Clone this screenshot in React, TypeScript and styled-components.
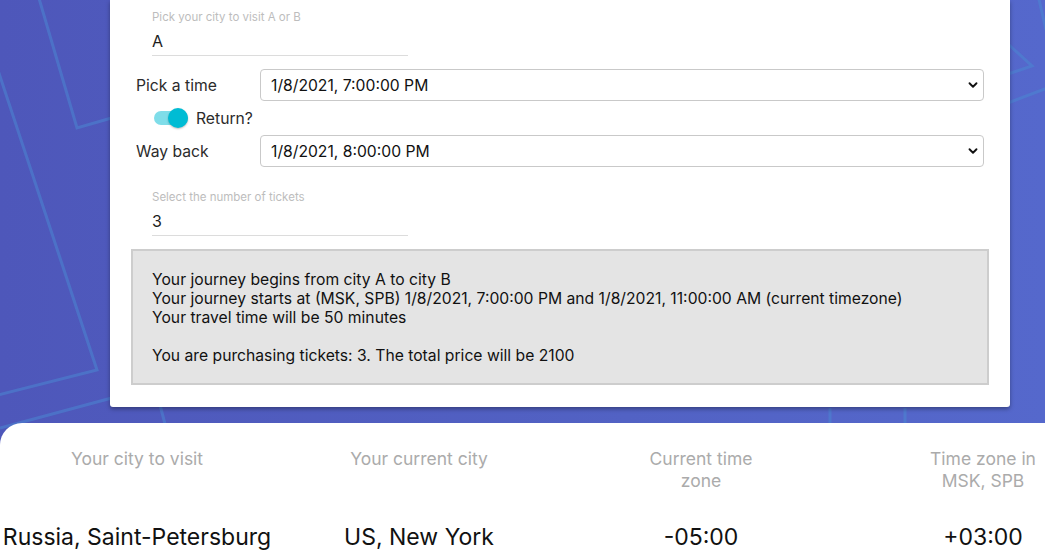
import React, { useState } from "react";
import styled, { createGlobalStyle } from "styled-components";
import { ChevronDown } from "lucide-react";

const GlobalStyle = createGlobalStyle`
  html, body {
    margin: 0;
    padding: 0;
    height: 100%;
    overflow: hidden;
  }
  body {
    font-family: Inter, "Noto Sans", "Liberation Sans", sans-serif;
    background: linear-gradient(90deg, #4e57ba 0%, #5262c4 60%, #5568cc 100%);
    color: #1d1d1d;
  }
`;

const TIMES = ["1/8/2021, 7:00:00 PM", "1/8/2021, 8:00:00 PM", "1/8/2021, 9:00:00 PM"];

const INFO = [
  { header: "Your city to visit", value: "Russia, Saint-Petersburg" },
  { header: "Your current city", value: "US, New York" },
  { header: "Current time zone", value: "-05:00", narrow: true },
  { header: "Time zone in MSK, SPB", value: "+03:00", narrow: true },
];

const Page = styled.div`
  position: relative;
  min-height: 100vh;
  display: flex;
  flex-direction: column;
  gap: 16px;
`;

const Lines = styled.svg`
  position: absolute;
  inset: 0;
  width: 100%;
  height: 100%;
  pointer-events: none;
  z-index: 0;
`;

const Card = styled.section`
  position: relative;
  z-index: 1;
  width: 900px;
  margin-left: 110px;
  box-sizing: border-box;
  padding: 10px 21px 22px;
  background: #fff;
  border-radius: 0 0 3px 3px;
  box-shadow: 0 2px 4px rgba(0, 0, 0, 0.35);
  display: flex;
  flex-direction: column;
`;

const Field = styled.label<{ $gap?: number }>`
  display: flex;
  flex-direction: column;
  width: 256px;
  margin-left: 21px;
  margin-top: ${(p) => p.$gap ?? 0}px;
`;

const FieldLabel = styled.span`
  font-size: 11.5px;
  line-height: 14px;
  color: #bdbdbd;
`;

const FieldInput = styled.input`
  font: inherit;
  font-size: 16px;
  color: #1d1d1d;
  height: 28px;
  padding: 3px 0 0;
  border: none;
  border-bottom: 1px solid #dcdcdc;
  outline: none;
  background: transparent;
`;

const SelectRow = styled.div<{ $gap?: number }>`
  display: flex;
  align-items: center;
  padding: 0 5px;
  margin-top: ${(p) => p.$gap ?? 0}px;
`;

const RowLabel = styled.span`
  width: 124px;
  flex: none;
  font-size: 15.7px;
  color: #2b2b2b;
`;

const SelectWrap = styled.div`
  position: relative;
  flex: 1;
`;

const Select = styled.select`
  appearance: none;
  width: 100%;
  height: 32px;
  box-sizing: border-box;
  padding: 0 30px 0 10px;
  font: inherit;
  font-size: 15.7px;
  color: #111;
  background: #fff;
  border: 1px solid #c9c9c9;
  border-radius: 4px;
  outline: none;
`;

const Chevron = styled(ChevronDown)`
  position: absolute;
  right: 4px;
  top: 9px;
  pointer-events: none;
  color: #111;
`;

const ToggleRow = styled.label`
  display: flex;
  align-items: center;
  gap: 8px;
  height: 34px;
  padding-left: 23px;
  font-size: 15.7px;
  color: #2b2b2b;
  cursor: pointer;
`;

const Track = styled.span<{ $on: boolean }>`
  position: relative;
  width: 34px;
  height: 14px;
  border-radius: 7px;
  background: ${(p) => (p.$on ? "#7fdde9" : "#c4c4c4")};
`;

const Thumb = styled.span<{ $on: boolean }>`
  position: absolute;
  top: -3px;
  left: ${(p) => (p.$on ? "14px" : "0")};
  width: 20px;
  height: 20px;
  border-radius: 50%;
  background: ${(p) => (p.$on ? "#00bcd4" : "#f5f5f5")};
  box-shadow: 0 1px 2px rgba(0, 0, 0, 0.25);
`;

const Summary = styled.div`
  margin-top: 13px;
  padding: 19px 19px 18px;
  background: #e4e4e4;
  border: 2px solid #cdcdcd;
  font-size: 15.7px;
  line-height: 19px;
  color: #111;
`;

const Line = styled.p<{ $gap?: boolean }>`
  margin: 0;
  margin-top: ${(p) => (p.$gap ? "19px" : "0")};
`;

const InfoPanel = styled.section`
  position: relative;
  z-index: 1;
  flex: 1;
  background: #fff;
  border-radius: 22px 0 0 0;
  padding-top: 25px;
  overflow: hidden;
`;

const InfoGrid = styled.div`
  display: grid;
  grid-template-columns: repeat(4, 282px);
  grid-auto-flow: column;
  grid-template-rows: auto auto;
  row-gap: 32px;
  margin-left: -4px;
  width: max-content;
`;

const InfoHeader = styled.div<{ $narrow?: boolean }>`
  justify-self: center;
  max-width: ${(p) => (p.$narrow ? "115px" : "none")};
  text-align: center;
  font-size: 17.5px;
  line-height: 22px;
  color: #ababab;
`;

const InfoValue = styled.div`
  text-align: center;
  font-size: 23px;
  line-height: 26px;
  color: #111;
`;

function BackgroundLines() {
  return (
    <Lines viewBox="0 0 1045 559" preserveAspectRatio="none">
      <g fill="none" stroke="#4b86d2" strokeOpacity={0.55} strokeWidth={3}>
        <polyline points="38,-5 77,128 115,117" />
        <polyline points="-6,58 97,370 -6,396" />
        <polyline points="0,428 108,399 116,397" />
        <line x1="160" y1="405" x2="165" y2="424" />
        <line x1="830" y1="408" x2="830" y2="424" />
        <line x1="905" y1="408" x2="905" y2="424" />
        <polyline points="1038,-5 1046,30" />
        <polyline points="1008,44 1032,66 1008,74" />
        <line x1="1008" y1="103" x2="1050" y2="87" />
      </g>
    </Lines>
  );
}

export default function App() {
  const [city, setCity] = useState("A");
  const [tickets, setTickets] = useState("3");
  const [start, setStart] = useState(TIMES[0]);
  const [back, setBack] = useState(TIMES[1]);
  const [returning, setReturning] = useState(true);

  const total = (Number(tickets) || 0) * 700;

  return (
    <Page>
      <GlobalStyle />
      <BackgroundLines />
      <Card>
        <Field>
          <FieldLabel>Pick your city to visit A or B</FieldLabel>
          <FieldInput value={city} onChange={(e) => setCity(e.target.value)} />
        </Field>

        <SelectRow $gap={13}>
          <RowLabel>Pick a time</RowLabel>
          <SelectWrap>
            <Select value={start} onChange={(e) => setStart(e.target.value)}>
              {TIMES.map((t) => (
                <option key={t}>{t}</option>
              ))}
            </Select>
            <Chevron size={14} strokeWidth={3.2} />
          </SelectWrap>
        </SelectRow>

        <ToggleRow onClick={() => setReturning(!returning)}>
          <Track $on={returning}>
            <Thumb $on={returning} />
          </Track>
          Return?
        </ToggleRow>

        <SelectRow>
          <RowLabel>Way back</RowLabel>
          <SelectWrap>
            <Select value={back} onChange={(e) => setBack(e.target.value)}>
              {TIMES.map((t) => (
                <option key={t}>{t}</option>
              ))}
            </Select>
            <Chevron size={14} strokeWidth={3.2} />
          </SelectWrap>
        </SelectRow>

        <Field $gap={23}>
          <FieldLabel>Select the number of tickets</FieldLabel>
          <FieldInput value={tickets} onChange={(e) => setTickets(e.target.value)} />
        </Field>

        <Summary>
          <Line>Your journey begins from city A to city B</Line>
          <Line>
            Your journey starts at (MSK, SPB) 1/8/2021, 7:00:00 PM and 1/8/2021, 11:00:00 AM (current timezone)
          </Line>
          <Line>Your travel time will be 50 minutes</Line>
          <Line $gap>You are purchasing tickets: {tickets}. The total price will be {total}</Line>
        </Summary>
      </Card>

      <InfoPanel>
        <InfoGrid>
          {INFO.map((col) => (
            <React.Fragment key={col.header}>
              <InfoHeader $narrow={col.narrow}>{col.header}</InfoHeader>
              <InfoValue>{col.value}</InfoValue>
            </React.Fragment>
          ))}
        </InfoGrid>
      </InfoPanel>
    </Page>
  );
}
